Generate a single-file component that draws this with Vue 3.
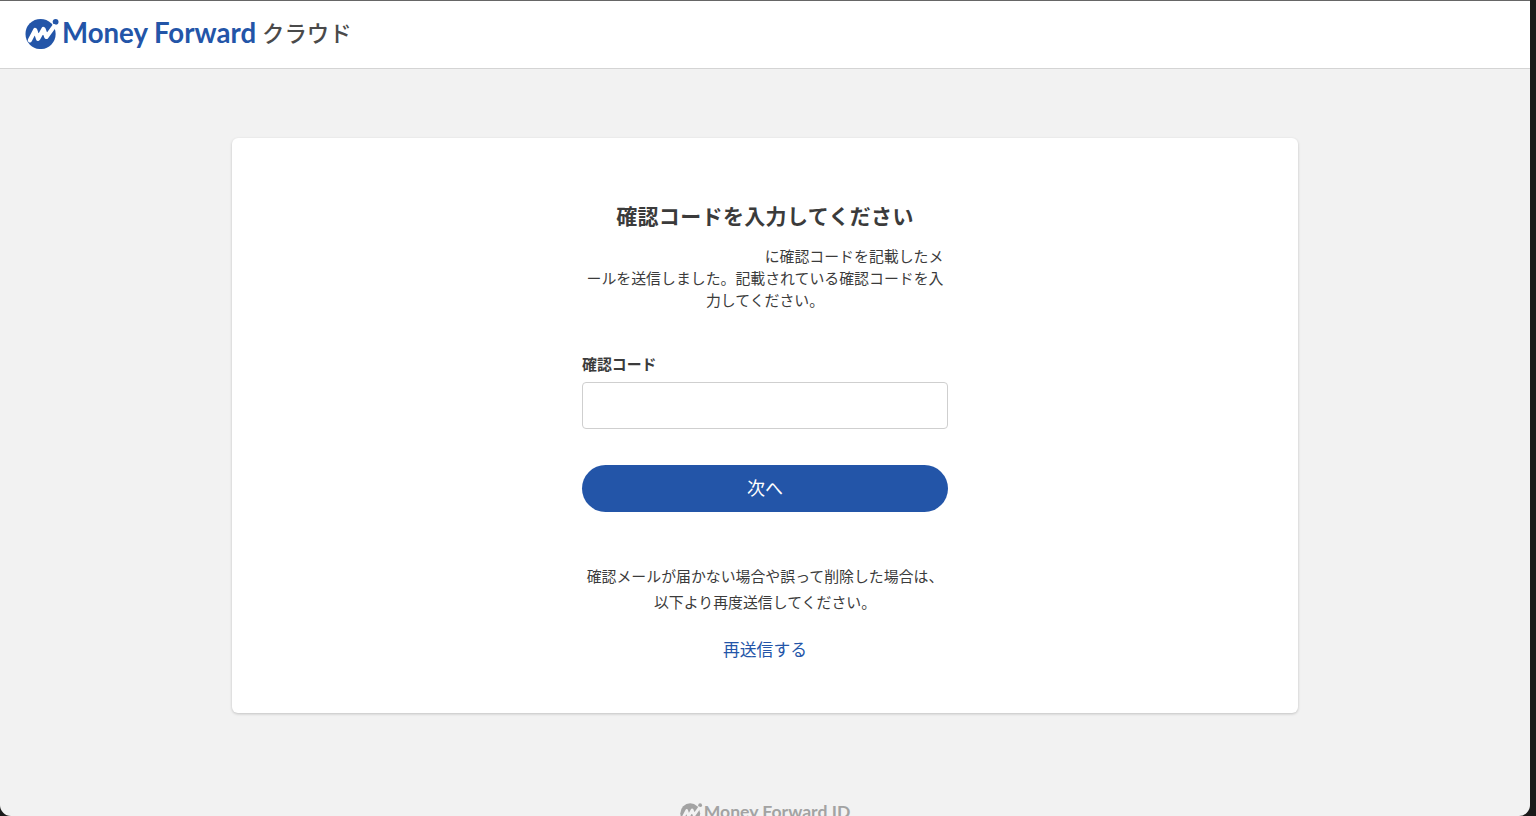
<script setup>
const brand = 'Money Forward'
</script>

<template>
  <div class="screen">
    <div class="window">
      <header class="topbar">
        <svg class="mark" viewBox="0 0 36 32" aria-hidden="true">
          <circle cx="16" cy="17" r="15.5" fill="#2355a8" />
          <circle cx="31.5" cy="4.5" r="3" fill="#2355a8" />
          <path d="M5 23.5 L10.5 13 L13.5 22 L19 12 L22 20 L30 9" fill="none" stroke="#fff" stroke-width="4.4" stroke-linejoin="round" stroke-linecap="round" />
        </svg>
        <span class="brand">{{ brand }}</span>
        <span class="product">クラウド</span>
      </header>
      <main class="main">
        <section class="card">
          <div class="column">
            <h1 class="title">確認コードを入力してください</h1>
            <p class="lead"><span class="mail"></span>に確認コードを記載したメ<br />ールを送信しました。記載されている確認コードを入<br />力してください。</p>
            <label class="label" for="code">確認コード</label>
            <input id="code" class="input" type="text" />
            <button class="next" type="button">次へ</button>
            <p class="note">確認メールが届かない場合や誤って削除した場合は、<br />以下より再度送信してください。</p>
            <a class="resend" href="#">再送信する</a>
          </div>
        </section>
        <footer class="foot">
          <svg class="foot-mark" viewBox="0 0 36 32" aria-hidden="true">
            <circle cx="16" cy="17" r="15.5" fill="#a3a3a3" />
            <circle cx="31.5" cy="4.5" r="3" fill="#a3a3a3" />
            <path d="M5 23.5 L10.5 13 L13.5 22 L19 12 L22 20 L30 9" fill="none" stroke="#f2f2f2" stroke-width="4.4" stroke-linejoin="round" stroke-linecap="round" />
          </svg>
          <span class="foot-name">Money Forward ID</span>
        </footer>
      </main>
    </div>
  </div>
</template>

<style scoped>
.screen {
  width: 1536px;
  height: 816px;
  background: #1a1a1a;
  overflow: hidden;
  font-family: "Noto Sans CJK JP", "Noto Sans", sans-serif;
  color: #3b3b3b;
}
.window {
  width: 1530px;
  height: 816px;
  background: #f2f2f2;
  border-radius: 0 0 11px 11px;
  overflow: hidden;
  display: flex;
  flex-direction: column;
}
.topbar {
  height: 63px;
  padding-bottom: 4px;
  flex: none;
  box-sizing: content-box;
  background: #fff;
  border-top: 1px solid #666;
  border-bottom: 1px solid #d4d4d4;
  display: flex;
  align-items: center;
  padding-left: 25px;
}
.mark {
  width: 35px;
  height: 32px;
  flex: none;
  margin-right: 2px;
}
.brand {
  font-family: Lato, sans-serif;
  font-weight: 700;
  font-size: 27.6px;
  color: #2355a8;
  line-height: 32px;
  white-space: nowrap;
}
.product {
  font-size: 22.4px;
  font-weight: 500;
  line-height: 32px;
  padding-bottom: 2px;
  color: #4a4a4a;
  margin-left: 6px;
  white-space: nowrap;
}
.main {
  flex: 1;
  min-height: 0;
  display: flex;
  flex-direction: column;
  align-items: center;
}
.card {
  width: 1066px;
  height: 575px;
  flex: none;
  margin-top: 69px;
  background: #fff;
  border-radius: 6px;
  box-shadow: 0 1px 3px rgba(0, 0, 0, 0.2);
  display: flex;
  justify-content: center;
}
.column {
  width: 366px;
  display: flex;
  flex-direction: column;
  align-items: stretch;
  text-align: center;
  padding-top: 61px;
}
.title {
  margin: 0;
  font-size: 21px;
  line-height: 32px;
  font-weight: 700;
  letter-spacing: 0.35px;
  white-space: nowrap;
}
.lead {
  margin: 14px 0 0;
  font-size: 14.9px;
  line-height: 22.2px;
  white-space: nowrap;
}
.mail {
  display: inline-block;
  width: 178px;
}
.label {
  margin-top: 41px;
  text-align: left;
  font-size: 14.9px;
  line-height: 22px;
  font-weight: 700;
}
.input {
  display: block;
  box-sizing: border-box;
  width: 100%;
  height: 47px;
  margin-top: 7px;
  background: #fff;
  border: 1px solid #cfcfcf;
  border-radius: 4px;
  outline: none;
}
.next {
  display: block;
  width: 100%;
  height: 47px;
  margin-top: 36px;
  padding: 0 0 2px;
  border: 0;
  border-radius: 24px;
  background: #2355a8;
  color: #fff;
  font-family: inherit;
  font-size: 18px;
}
.note {
  margin: 51px 0 0;
  font-size: 14.9px;
  line-height: 26px;
  white-space: nowrap;
}
.resend {
  margin-top: 22px;
  font-size: 16.8px;
  line-height: 24px;
  color: #2355a8;
  text-decoration: none;
}
.foot {
  margin-top: 88px;
  display: flex;
  align-items: center;
  flex: none;
  height: 22px;
}
.foot-mark {
  width: 23px;
  height: 21px;
  flex: none;
  margin-right: 1px;
}
.foot-name {
  font-family: Lato, sans-serif;
  font-weight: 700;
  font-size: 17.6px;
  line-height: 22px;
  color: #a3a3a3;
  white-space: nowrap;
}
</style>
